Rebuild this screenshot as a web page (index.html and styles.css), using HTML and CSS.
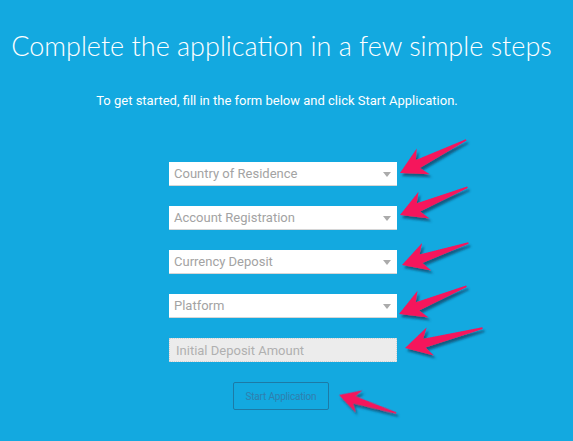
FILE: index.html
```html
<!DOCTYPE html>
<html lang="en">
<head>
    <meta charset="UTF-8">
    <meta name="viewport" content="width=device-width, initial-scale=1.0">
    <title>Start Application</title>
    <link rel="stylesheet" href="styles.css">
</head>
<body>
    <div class="page">
        <h1 class="title">Complete the application in a few simple steps</h1>
        <p class="intro">To get started, fill in the form below and click Start Application.</p>

        <form class="apply-form">
            <div class="select-box"><span>Country of Residence</span><i class="caret"></i></div>
            <div class="select-box"><span>Account Registration</span><i class="caret"></i></div>
            <div class="select-box"><span>Currency Deposit</span><i class="caret"></i></div>
            <div class="select-box"><span>Platform</span><i class="caret"></i></div>
            <input class="amount-input" type="text" placeholder="Initial Deposit Amount" disabled>
            <button class="start-btn" type="button" disabled>Start Application</button>
        </form>

        <!-- Pointer arrows laid over the form -->
        <svg class="pointers" width="573" height="441" viewBox="0 0 573 441">
            <defs>
                <filter id="arrowShadow" x="-20%" y="-40%" width="150%" height="190%">
                    <feDropShadow dx="2" dy="3" stdDeviation="1.3" flood-color="#0b3d5c" flood-opacity="0.7"/>
                </filter>
            </defs>
            <g class="arrow" filter="url(#arrowShadow)">
                <g transform="translate(400 173) rotate(-26.6)">
                    <polygon points="0,0 26,-14.5 20,-4.5 74,-0.8 74,0.8 20,4.5 26,14.5"/>
                </g>
                <g transform="translate(400 215) rotate(-22.4)">
                    <polygon points="0,0 26,-14.5 20,-4.5 73,-0.8 73,0.8 20,4.5 26,14.5"/>
                </g>
                <g transform="translate(402 265) rotate(-18.4)">
                    <polygon points="0,0 26,-14.5 20,-4.5 70,-0.8 70,0.8 20,4.5 26,14.5"/>
                </g>
                <g transform="translate(399 314) rotate(-22.4)">
                    <polygon points="0,0 26,-14.5 20,-4.5 73,-0.8 73,0.8 20,4.5 26,14.5"/>
                </g>
                <g transform="translate(405 348) rotate(-14.4)">
                    <polygon points="0,0 26,-14.5 20,-4.5 80,-0.8 80,0.8 20,4.5 26,14.5"/>
                </g>
                <g transform="translate(339 395) rotate(17.5)">
                    <polygon points="0,0 21,-11.5 16,-3.8 60,-0.7 60,0.7 16,3.8 21,11.5"/>
                </g>
            </g>
        </svg>
    </div>
</body>
</html>
```

FILE: styles.css
```css
/* Colours used across the page */
:root {
    --brand-blue: #13a9e0;
    --field-text: #a3a3a3;
    --field-line: #d6d6d6;
    --button-line: #1d7aa6;
    --arrow: #f5155b;
}

* {
    margin: 0;
    padding: 0;
    box-sizing: border-box;
}

body {
    background: var(--brand-blue);
    font-family: Roboto, "Liberation Sans", Arial, sans-serif;
}

.page {
    position: relative;
    width: 573px;
    height: 441px;
    overflow: hidden;
    background: var(--brand-blue);
    color: #fff;
}

/* Heading block */
.title {
    font-family: Lato, "Open Sans", sans-serif;
    font-weight: 300;
    font-size: 27px;
    line-height: 32px;
    text-align: center;
    padding-top: 30px;
    padding-right: 10px;
}

.intro {
    font-size: 13px;
    line-height: 16px;
    text-align: center;
    margin-top: 31px;
    margin-right: 19px;
}

/* Form column */
.apply-form {
    display: flex;
    flex-direction: column;
    gap: 20px;
    width: 228px;
    margin-top: 53px;
    margin-left: 169px;
}

.select-box {
    display: flex;
    align-items: center;
    justify-content: space-between;
    height: 24px;
    padding: 0 6px 0 5px;
    background: #fff;
    border-bottom: 1px solid var(--field-line);
    color: var(--field-text);
    font-size: 13px;
}

.caret {
    width: 0;
    height: 0;
    border-left: 4.5px solid transparent;
    border-right: 4.5px solid transparent;
    border-top: 5px solid #ababab;
    margin-top: 2px;
}

.amount-input {
    height: 24px;
    padding: 0 6px;
    background: #ececec;
    border: 1px dotted #d2d2d2;
    font-family: inherit;
    font-size: 13px;
    color: var(--field-text);
    outline: none;
}

.amount-input::placeholder {
    color: #b0b0b0;
}

.start-btn {
    align-self: flex-start;
    margin-left: 64px;
    width: 96px;
    height: 28px;
    background: transparent;
    border: 1px solid var(--button-line);
    border-radius: 2px;
    color: #2f7fae;
    font-family: inherit;
    font-size: 10px;
    letter-spacing: -0.2px;
}

/* Arrow overlay */
.pointers {
    position: absolute;
    top: 0;
    left: 0;
    pointer-events: none;
}

.arrow polygon {
    fill: var(--arrow);
}
```
